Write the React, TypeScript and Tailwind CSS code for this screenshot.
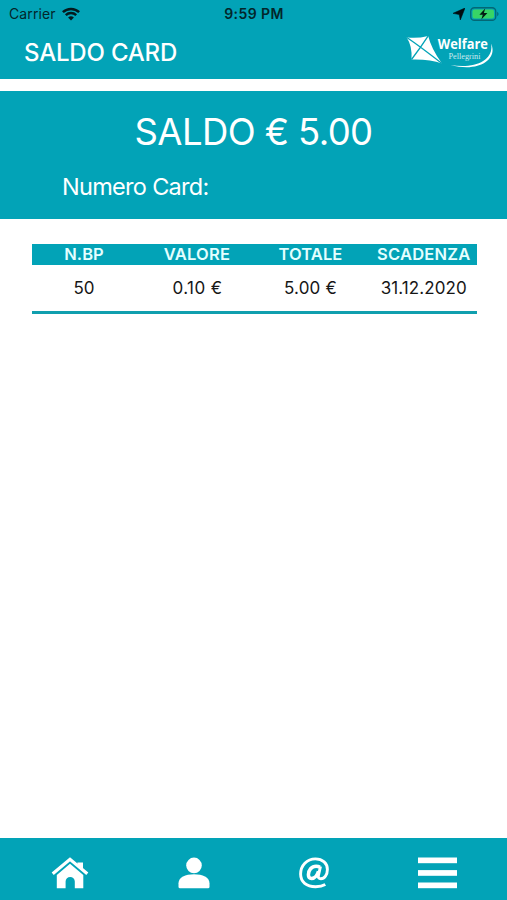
interface CardRow {
  nbp: string;
  valore: string;
  totale: string;
  scadenza: string;
}

const rows: CardRow[] = [
  { nbp: "50", valore: "0.10 €", totale: "5.00 €", scadenza: "31.12.2020" },
];

const StatusBar = () => (
  <div className="grid grid-cols-3 items-center h-7 pl-[9px] pr-[8px] text-[14px] leading-none text-[#03262b]">
    <div className="flex items-center gap-[6px]">
      <span className="tracking-[0.1px]">Carrier</span>
      <svg width="18" height="14" viewBox="0 0 18 14" fill="none" stroke="#041a1e">
        <path d="M.9 5.2a11.6 11.6 0 0 1 16.2 0" strokeWidth="2.5" />
        <path d="M3.8 8.2a7.4 7.4 0 0 1 10.4 0" strokeWidth="2.4" />
        <path d="M9 13.6 6.1 10.6a4.2 4.2 0 0 1 5.8 0Z" fill="#041a1e" stroke="none" />
      </svg>
    </div>
    <span className="text-center font-semibold tracking-[0.4px] whitespace-nowrap">9:59 PM</span>
    <div className="flex items-center justify-end gap-[5px]">
      <svg width="12" height="12" viewBox="0 0 11 11" fill="#020d10">
        <path d="M11 0 6.7 11 5.7 6 0 4.9Z" stroke="#020d10" strokeWidth=".5" />
      </svg>
      <svg width="29" height="14" viewBox="0 0 29 14">
        <rect x=".75" y=".75" width="25" height="12.5" rx="3.6" fill="none" stroke="#036775" strokeWidth="1.3" />
        <rect x="2.5" y="2.5" width="21.5" height="9" rx="2" fill="#37d466" />
        <path d="M27.2 4.8c1.8.7 1.8 3.7 0 4.4Z" fill="#036775" />
        <path d="M15.2 1.6 9.4 7.7h3.4l-1.5 4.7 6.1-6.3h-3.5Z" fill="#031b12" />
      </svg>
    </div>
  </div>
);

const Logo = () => (
  <svg width="90" height="38" viewBox="0 0 90 38" fill="#fff">
    <path d="M1.5 5.2Q11 7 23.2 3.9 26 16 37 31.6 25 27 6.5 27.5 7.5 14 1.5 5.2Z" />
    <path d="M1.5 5.2Q16 15 37 31.6M23.2 3.9Q16 15 6.5 27.5" stroke="#02a3b7" strokeWidth="1.3" fill="none" />
    <text x="32.8" y="16.6" fontSize="14" fontWeight="700" fontFamily="'Open Sans', sans-serif" textLength="50" lengthAdjust="spacingAndGlyphs">
      Welfare
    </text>
    <text x="43.5" y="27.3" fontSize="8.8" fillOpacity=".8" fontFamily="'Liberation Serif', serif" textLength="32" lengthAdjust="spacingAndGlyphs">
      Pellegrini
    </text>
    <path d="M86 11.5C93 26 76 41 45.5 33 70 37.5 89.5 28 86 11.5Z" />
  </svg>
);

const HomeIcon = () => (
  <svg width="38" height="32" viewBox="0 0 38 32" fill="#fff">
    <path d="M1.7 16.8 19 2.3l17.3 14.5" fill="none" stroke="#fff" strokeWidth="3.2" />
    <path d="M26.4 5.4H32v8.3l-5.6-4.8Z" />
    <path d="M19 6.7 32.3 18v13.3h-8.5v-6.8a4.6 4.6 0 0 0-9.2 0v6.8H5.8V18Z" />
  </svg>
);

const UserIcon = () => (
  <svg width="32" height="32" viewBox="0 0 32 32" fill="#fff">
    <circle cx="16" cy="8.4" r="7.8" />
    <path d="M.5 29.8v-3.6C.5 20.5 7.4 17.3 16 17.3s15.5 3.2 15.5 8.9v3.6q0 1.5-1.5 1.5H2q-1.5 0-1.5-1.5Z" />
  </svg>
);

const AtIcon = () => (
  <svg width="30" height="32" viewBox="0 0 30 32" fill="none" stroke="#fff">
    <path d="M26.3 27.6C23.8 29 20.6 29.7 16.6 29.7 7.4 29.7 1.6 25 1.6 17.1 1.6 8.2 8 1.9 16.4 1.9c7.3 0 12 4.4 12 10.6 0 5.4-3 9.3-6.5 9.3-2.1 0-2.9-1.2-2.5-3.2L21.5 9.4" strokeWidth="2.9" />
    <path d="M20.8 10.1c-1-.6-2.3-.9-3.7-.9-4.5 0-7.7 3.9-7.7 8.6 0 2.3 1.1 3.7 3.1 3.7 3.2 0 6-3.7 7-7.2" strokeWidth="3.5" />
  </svg>
);

const MenuIcon = () => (
  <svg width="39" height="32" viewBox="0 0 39 32" fill="#fff">
    <rect y=".5" width="39" height="5.7" />
    <rect y="13.1" width="39" height="5.7" />
    <rect y="25.5" width="39" height="5.7" />
  </svg>
);

const App = () => {
  const tableRows = rows.map((row, index) => (
    <tr key={index} className="h-[47px] border-b-[3px] border-[#109fae] align-top">
      <td className="pt-[11px] pr-1">{row.nbp}</td>
      <td className="pt-[11px] pl-0.5 tracking-[0.4px]">{row.valore}</td>
      <td className="pt-[11px] pl-0.5 tracking-[0.2px]">{row.totale}</td>
      <td className="pt-[11px] pl-[5px] tracking-[0.1px]">{row.scadenza}</td>
    </tr>
  ));

  return (
    <div className="flex flex-col h-screen bg-white font-['Inter',sans-serif]">
      <header className="h-[79px] shrink-0 bg-[#02a3b7]">
        <StatusBar />
        <div className="flex justify-between pl-6 pr-[12px]">
          <h1 className="pt-[10px] text-[24px] leading-[30px] font-medium text-white tracking-[-0.2px]">
            SALDO CARD
          </h1>
          <div className="pt-[4px]">
            <Logo />
          </div>
        </div>
      </header>

      <section className="mt-[12px] h-[128px] shrink-0 bg-[#02a3b7] text-white">
        <p className="pt-[19px] text-center text-[36.5px] leading-[44px] font-normal tracking-[-0.6px]">
          SALDO € 5.00
        </p>
        <p className="pt-[18px] pl-[62px] text-[23.5px] leading-[30px] font-normal tracking-[-0.7px]">
          Numero Card:
        </p>
      </section>

      <main className="grow pt-[25px] pl-[32px] pr-[30.5px]">
        <table className="w-full table-fixed border-collapse text-center text-[17px] leading-6 text-[#161616]">
          <colgroup>
            <col className="w-[108px]" />
            <col className="w-[113px]" />
            <col className="w-[113px]" />
            <col />
          </colgroup>
          <thead>
            <tr className="h-[21px] bg-[#02a3b7] text-[16.5px] leading-[21px] text-[#e4ffff]">
              <th className="p-0 pr-1 font-semibold">N.BP</th>
              <th className="p-0 pl-px font-semibold tracking-[0.2px]">VALORE</th>
              <th className="p-0 pl-0.5 font-semibold tracking-[0.1px]">TOTALE</th>
              <th className="p-0 pl-[5px] font-semibold tracking-[0.2px]">SCADENZA</th>
            </tr>
          </thead>
          <tbody>{tableRows}</tbody>
        </table>
      </main>

      <nav className="flex h-[62px] shrink-0 items-start justify-between bg-[#02a3b7] pl-[51px] pr-[50px] pt-[19px] text-white">
        <HomeIcon />
        <UserIcon />
        <AtIcon />
        <MenuIcon />
      </nav>
    </div>
  );
};

export default App;
